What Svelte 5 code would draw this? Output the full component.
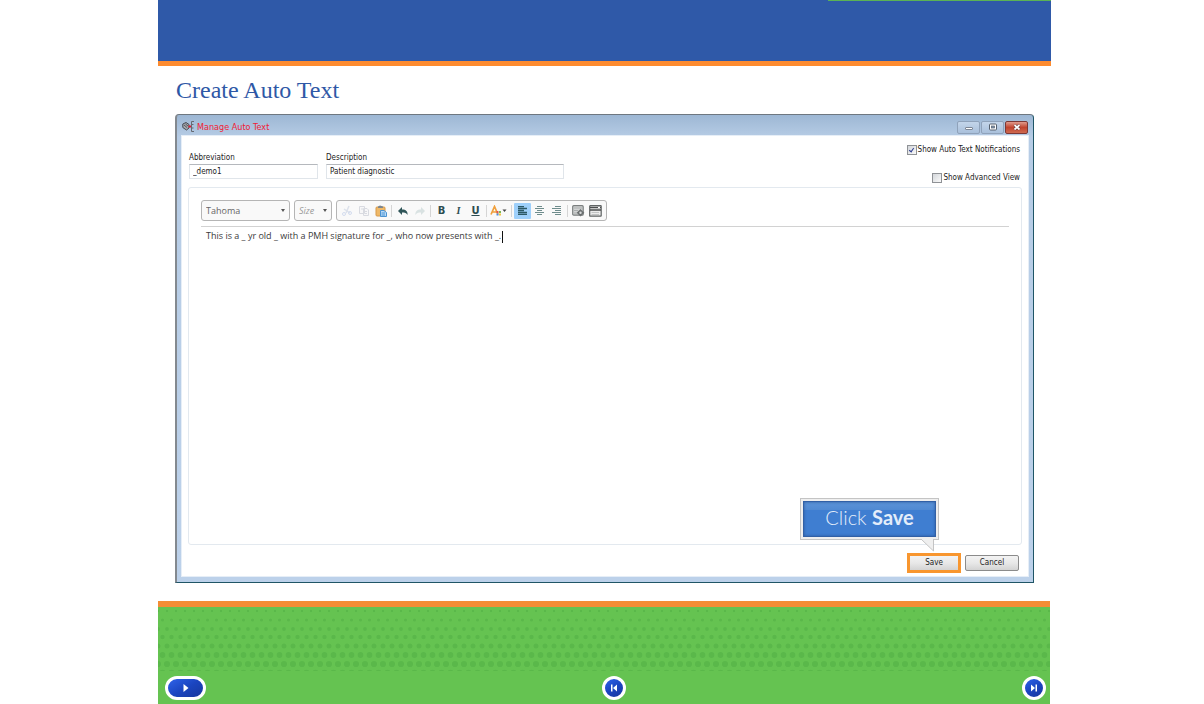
<script lang="ts">
  let abbreviation = $state("_demo1");
  let description = $state("Patient diagnostic");
  let notifications = $state(true);
  let advanced = $state(false);

  const dotRows = [
    { y: 4, r: 1.2 },
    { y: 13, r: 1.6 },
    { y: 22, r: 1.9 },
    { y: 30, r: 2.2 },
    { y: 39, r: 2.5 },
    { y: 48, r: 2.9 },
    { y: 57, r: 3.1 },
    { y: 66, r: 3.3 },
  ];
</script>

<div class="slide">
  <header class="banner"></header>

  <main>
    <h1>Create Auto Text</h1>

    <section class="window">
      <div class="titlebar">
        <svg class="app-icon" width="12" height="11" viewBox="0 0 12 11">
          <path d="M.8 3 4 1.500 7 3.500V7L4.500 9 .8 6.500z" fill="#a5a8ae" stroke="#474b53" />
          <path d="M2 4 5 6.500M3.500 3 6 5" stroke="#41454d" fill="none" stroke-width=".8" />
          <path d="M6.500 5.500H9" stroke="#e11f35" stroke-width="2" />
          <path d="M12 .5H9.500V10.500H12M9.500 3.500H11.500M9.500 7H11.500" stroke="#666a72" fill="none" />
        </svg>
        <h2>Manage Auto Text</h2>
        <div class="window-buttons">
          <button aria-label="Minimize">
            <svg width="10" height="8" viewBox="0 0 10 8"><rect x="1.500" y="4.500" width="7" height="2" rx=".5" fill="#fff" stroke="#7d8796" /></svg>
          </button>
          <button aria-label="Maximize">
            <svg width="10" height="8" viewBox="0 0 10 8"><rect x="1.500" y="1" width="7" height="6" rx="1" fill="#fff" stroke="#56616f" /><rect x="3.500" y="3" width="3" height="2" fill="#8296b0" stroke="#56616f" stroke-width=".7" /></svg>
          </button>
          <button class="close" aria-label="Close">
            <svg width="10" height="8" viewBox="0 0 10 8"><path d="M2.500 2 7.500 6.500M7.500 2 2.500 6.500" stroke="#5d3537" stroke-width="3" /><path d="M2.500 2 7.500 6.500M7.500 2 2.500 6.500" stroke="#fff" stroke-width="1.700" /></svg>
          </button>
        </div>
      </div>

      <div class="body">
        <div class="fields">
          <div class="field short">
            <label for="abbr">Abbreviation</label>
            <input id="abbr" type="text" bind:value={abbreviation} />
          </div>
          <div class="field">
            <label for="desc">Description</label>
            <input id="desc" type="text" bind:value={description} />
          </div>
          <div class="options">
            <label><input type="checkbox" bind:checked={notifications} />Show Auto Text Notifications</label>
            <label><input type="checkbox" bind:checked={advanced} />Show Advanced View</label>
          </div>
        </div>

        <div class="editor">
          <div class="toolbar">
            <div class="picker font">
              <select aria-label="Font"><option>Tahoma</option></select>
            </div>
            <div class="picker size">
              <select aria-label="Size"><option>Size</option></select>
            </div>
            <div class="tools">
              <button class="dim" aria-label="Cut">
                <svg width="12" height="12" viewBox="0 0 12 12"><path d="M8 1 5 8M3 4 9 8" stroke="#9aaccc" stroke-width="1.500" /><circle cx="3" cy="9" r="1.500" fill="none" stroke="#7d9bd8" /><circle cx="9" cy="8" r="1.500" fill="none" stroke="#7d9bd8" /></svg>
              </button>
              <button class="dim" aria-label="Copy">
                <svg width="12" height="12" viewBox="0 0 12 12"><path d="M1.500 1.500H6.500V8.500H1.500zM5.500 3.500H9L10.500 5V10.500H5.500z" fill="#f4f4f8" stroke="#8d96aa" /><path d="M3 4H5M7 6.500H9M7 8.500H9" stroke="#8d96aa" /></svg>
              </button>
              <button aria-label="Paste">
                <svg width="12" height="12" viewBox="0 0 12 12"><rect x="1" y="2" width="9" height="9" rx="1" fill="#efb968" stroke="#d79a4b" /><path d="M3 3V1.500L5 .5 8 1.500V3z" fill="#7b858f" /><path d="M5.500 5.500H9L11.500 7.500V11.500H5.500z" fill="#b6d9f7" stroke="#4b93d2" /><path d="M6.500 8H10M6.500 10H10" stroke="#4b93d2" /></svg>
              </button>
              <span class="sep"></span>
              <button aria-label="Undo">
                <svg width="12" height="12" viewBox="0 0 12 12"><path d="M5 2V4.500C9 4.500 11 6.500 10.500 10 9.500 8 8 7.500 5 7.500V10L1 6z" fill="#2f5558" /></svg>
              </button>
              <button class="dim" aria-label="Redo">
                <svg width="12" height="12" viewBox="0 0 12 12"><path d="M7 2V4.500C3 4.500 1 6.500 1.500 10 2.500 8 4 7.500 7 7.500V10L11 6z" fill="#92b0b0" /></svg>
              </button>
              <span class="sep"></span>
              <button class="letter bold">B</button>
              <button class="letter italic">I</button>
              <button class="letter underline">U</button>
              <span class="sep"></span>
              <button class="wide" aria-label="Text colour">
                <svg width="18" height="12" viewBox="0 0 18 12"><path d="M1 9.500 4.500 1.500 8 9.500M2.500 7H6.500" fill="none" stroke="#f0a03c" stroke-width="1.700" /><path d="M6.500 6h2v2h-2z" fill="#e2574b" /><path d="M9 6h2v2H9z" fill="#7cba55" /><path d="M6.500 8.500h2v2h-2z" fill="#4c8fe0" /><path d="M9 8.500h2v2H9z" fill="#efc445" /><path d="M12.500 4.500h4l-2 2.500z" fill="#444" /></svg>
              </button>
              <span class="sep"></span>
              <button class="on" aria-label="Align left">
                <svg width="9" height="9" viewBox="0 0 9 9"><path d="M0 .5H6M0 2.500H9M0 4.500H6M0 6.500H9M0 8.500H9" stroke="#2b5966" stroke-width="1.300" /></svg>
              </button>
              <button aria-label="Center">
                <svg width="9" height="9" viewBox="0 0 9 9"><path d="M2 .5H7M0 2.500H9M2 4.500H7M0 6.500H9M2 8.500H7" stroke="#6e8c8c" /></svg>
              </button>
              <button aria-label="Align right">
                <svg width="9" height="9" viewBox="0 0 9 9"><path d="M3 .5H9M0 2.500H9M3 4.500H9M0 6.500H9M3 8.500H9" stroke="#6e8c8c" /></svg>
              </button>
              <span class="sep"></span>
              <button aria-label="Insert token">
                <svg width="13" height="12" viewBox="0 0 13 12"><rect x=".7" y=".7" width="10.500" height="9.500" rx="1" fill="#d2d4d4" stroke="#7b7f7f" stroke-width="1.200" /><path d="M2 3H10M2 5.500H6M2 8H5" stroke="#aaadad" /><path d="M8.500 4 12.300 7.700 8.500 11.500 4.700 7.700z" fill="#6b6f70" /><circle cx="8.500" cy="7.700" r="1.200" fill="#d8dada" /></svg>
              </button>
              <button aria-label="Insert field">
                <svg width="13" height="12" viewBox="0 0 13 12"><rect x=".7" y=".7" width="11.500" height="10.500" rx=".5" fill="#ececec" stroke="#606464" stroke-width="1.200" /><path d="M1 2.500H12M1 5H12" stroke="#4b4e4e" stroke-width="1.300" /><path d="M2.500 7.500H10M2.500 9.500H10" stroke="#b8baba" stroke-width=".8" /><path d="M9 2.500h2" stroke="#fff" /></svg>
              </button>
            </div>
          </div>
          <p class="text">This is a _ yr old _ with a PMH signature for _, who now presents with _.<span class="caret"></span></p>
        </div>

        <div class="actions">
          <div class="save-wrap">
            <button class="action save">Save</button>
            <div class="callout">
              <div class="callout-face">Click <b>Save</b></div>
              <svg class="tail" width="14" height="13" viewBox="0 0 14 13"><path d="M0 0 12.500 12V0" fill="#efefef" stroke="#c4c4c4" /></svg>
            </div>
          </div>
          <button class="action">Cancel</button>
        </div>
      </div>
    </section>
  </main>

  <footer>
    <svg class="dots" width="100%" height="64" aria-hidden="true">
      <defs>
        <pattern id="dots" width="9" height="70" patternUnits="userSpaceOnUse">
          {#each dotRows as row, i}
            {#if i % 2}
              <circle cx="4.500" cy={row.y} r={row.r} />
            {:else}
              <circle cx="0" cy={row.y} r={row.r} />
              <circle cx="9" cy={row.y} r={row.r} />
            {/if}
          {/each}
        </pattern>
      </defs>
      <rect width="100%" height="64" fill="url(#dots)" />
    </svg>
    <nav>
      <button class="nav play" aria-label="Play">
        <svg width="10" height="10" viewBox="0 0 10 10"><path d="M2.500 1 7.500 5 2.500 9z" fill="#fff" /></svg>
      </button>
      <button class="nav" aria-label="Previous">
        <svg width="10" height="10" viewBox="0 0 10 10"><path d="M2 1.500H3.500V8.500H2zM8 1.500V8.500L4 5z" fill="#fff" /></svg>
      </button>
      <button class="nav" aria-label="Next">
        <svg width="10" height="10" viewBox="0 0 10 10"><path d="M8 1.500H6.500V8.500H8zM2 1.500V8.500L6 5z" fill="#fff" /></svg>
      </button>
    </nav>
  </footer>
</div>

<style>
  :global(body) {
    background: #fff;
  }

  .slide {
    box-sizing: border-box;
    min-height: 100vh;
    padding: 0 153px 0 158px;
    display: flex;
    flex-direction: column;
    font-family: "DejaVu Sans Condensed", "DejaVu Sans", Tahoma, sans-serif;
    font-size: 8px;
    line-height: 10px;
    color: #222;
  }

  button,
  input,
  select {
    font: inherit;
    color: inherit;
    box-sizing: border-box;
  }
  button {
    padding: 0;
    border: 0;
    background: none;
    display: flex;
    align-items: center;
    justify-content: center;
  }

  .banner {
    height: 61px;
    background: linear-gradient(#5bb254, #5bb254) right top / 25% 1px no-repeat #2f59a8;
    border-bottom: 5px solid #fd8b2f;
  }

  main {
    flex: 1;
    display: flex;
    flex-direction: column;
    padding: 8px 17px 18px;
  }

  h1 {
    margin: 0 0 8px 1px;
    font-family: "Liberation Serif", serif;
    font-size: 24px;
    font-weight: 400;
    line-height: 32px;
    color: #2f58a6;
  }

  /* Window frame */
  .window {
    flex: 1;
    display: flex;
    flex-direction: column;
    border: 1px solid #1f5566;
    border-top-color: #6e7780;
    border-left: 2px solid #83898f;
    border-radius: 4px 4px 0 0;
    background: linear-gradient(#9db7d4, #b6cce5 22px, #bcd1ea);
    padding: 0 4px 5px;
  }

  .titlebar {
    display: flex;
    align-items: center;
    gap: 3px;
    height: 20px;
    padding: 0 1px;
  }
  .titlebar h2 {
    flex: 1;
    margin: 0;
    padding-top: 4px;
    font-size: 9px;
    font-weight: 400;
    color: #f01b34;
  }
  .app-icon {
    margin-top: 3px;
  }
  .window-buttons {
    display: flex;
    gap: 1px;
    padding-top: 4px;
  }
  .window-buttons button {
    width: 23px;
    height: 13px;
    border: 1px solid #8fa2ba;
    border-radius: 2px;
    background: linear-gradient(#c3d5ea, #a9c0db);
  }
  .window-buttons .close {
    border-color: #7d3835;
    background: linear-gradient(#e09b8d, #c1442f 50%, #cf6a50);
  }

  .body {
    flex: 1;
    display: flex;
    flex-direction: column;
    background: #fff;
    border: 1px solid #e6eef7;
    padding: 0 6px 3px;
  }

  /* Fields */
  .fields {
    display: flex;
    gap: 8px;
    padding: 9px 2px 4px 1px;
  }
  .field {
    width: 238px;
    padding-top: 7px;
  }
  .field.short {
    width: 129px;
  }
  .field label {
    display: block;
    line-height: 12px;
  }
  .field input {
    display: block;
    width: 100%;
    height: 15px;
    padding: 0 3px;
    border: 1px solid #e0e5ea;
    border-top-color: #b5b8bd;
    background: #fff;
  }
  .options {
    flex: 1;
    display: flex;
    flex-direction: column;
    align-items: flex-end;
    gap: 18px;
  }
  .options label {
    display: flex;
    align-items: center;
    gap: 1px;
  }
  .options input {
    appearance: none;
    width: 10px;
    height: 10px;
    margin: 0;
    border: 1px solid #8f9296;
    background: linear-gradient(135deg, #d3d6da, #fafafa);
    display: grid;
    place-items: center;
  }
  .options input:checked::before {
    content: "";
    width: 2px;
    height: 4px;
    margin-bottom: 1px;
    border: solid #2e3f92;
    border-width: 0 1px 1px 0;
    transform: rotate(35deg);
  }

  /* Editor */
  .editor {
    flex: 1;
    border: 1px solid #e3e9ef;
    border-radius: 3px;
    padding: 12px;
  }
  .toolbar {
    display: flex;
    gap: 4px;
    padding-bottom: 5px;
    border-bottom: 1px solid #d2d2d2;
  }
  .picker,
  .tools {
    box-sizing: border-box;
    height: 21px;
    border: 1px solid #b5b5b5;
    border-radius: 3px;
    background: #f9f9f9;
  }
  .picker {
    position: relative;
    width: 89px;
  }
  .picker.size {
    width: 38px;
    font-style: italic;
  }
  .picker::after {
    content: "";
    position: absolute;
    right: 4px;
    top: 8px;
    border: 2px solid transparent;
    border-top: 3px solid #555;
    pointer-events: none;
  }
  .picker select {
    appearance: none;
    width: 100%;
    height: 19px;
    padding: 0 4px;
    border: 0;
    background: none;
    font-family: "Open Sans", sans-serif;
    font-size: 9px;
    color: #666;
  }
  .picker.size select {
    color: #999;
  }
  .tools {
    display: flex;
    align-items: center;
    padding: 0 2px 0 1px;
  }
  .tools button {
    width: 17px;
    height: 16px;
  }
  .tools .wide {
    width: 20px;
  }
  .tools .dim {
    opacity: 0.3;
  }
  .tools .on {
    background: #9ed0fb;
    border-radius: 1px;
  }
  .sep {
    width: 1px;
    height: 12px;
    margin: 0 2px;
    background: #d5d5d5;
  }
  .letter {
    font-family: "DejaVu Sans", sans-serif;
    font-size: 10px;
    font-weight: 700;
    color: #2c4c50;
  }
  .italic {
    font-family: "Liberation Serif", serif;
    font-style: italic;
  }
  .underline {
    text-decoration: underline;
  }
  .text {
    margin: 3px 0 0 5px;
    font-family: "Open Sans", "Noto Sans", sans-serif;
    font-size: 9px;
    line-height: 12px;
    color: #3a3a3a;
  }
  .caret {
    display: inline-block;
    width: 1px;
    height: 12px;
    margin-left: 1px;
    vertical-align: middle;
    background: #111;
  }

  /* Actions */
  .actions {
    display: flex;
    justify-content: flex-end;
    align-items: center;
    gap: 4px;
    padding: 8px 3px 0 0;
  }
  .action {
    width: 54px;
    height: 16px;
    border: 1px solid #8b8b8b;
    border-radius: 2px;
    background: linear-gradient(#f3f3f3, #e8e8e8 50%, #d3d3d3);
  }
  .save-wrap {
    position: relative;
  }
  .save {
    height: 20px;
    border: 3px solid #f8962f;
    border-radius: 0;
  }
  .callout {
    position: absolute;
    right: 22px;
    bottom: 33px;
    border: 1px solid #c4c4c4;
    background: #efefef;
    padding: 2px;
  }
  .callout-face {
    width: 131px;
    height: 34px;
    border: 1px solid #3160a6;
    box-shadow: inset 0 0 3px #2b599c;
    background: linear-gradient(#5c94d8, #5089d2 24%, #3f7ed1 25%, #3f7ed1);
    color: #e3edfa;
    font-family: "Century Gothic", Lato, sans-serif;
    font-size: 20px;
    font-weight: 300;
    line-height: 30px;
    text-align: center;
  }
  .callout-face b {
    font-weight: 700;
  }
  .tail {
    position: absolute;
    right: 3px;
    top: 100%;
  }

  /* Footer */
  footer {
    height: 97px;
    margin-right: 1px;
    border-top: 6px solid #f48d35;
    background: #65c351;
  }
  .dots {
    display: block;
    fill: #5ab84a;
  }
  nav {
    display: flex;
    justify-content: space-between;
    align-items: center;
    padding: 5px 4px 0 7px;
  }
  .nav {
    width: 24px;
    height: 24px;
    border: 3px solid #fff;
    border-radius: 12px;
    background: linear-gradient(150deg, #2f63ea, #1b45c0 50%, #17379c);
  }
  .play {
    width: 41px;
  }
</style>
